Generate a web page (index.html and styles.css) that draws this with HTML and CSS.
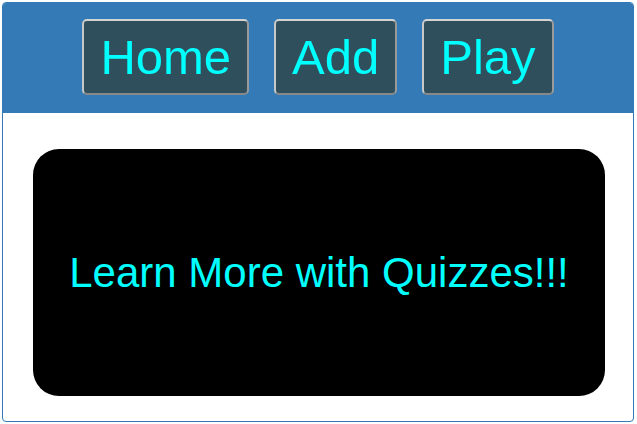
FILE: index.html
```html
<!DOCTYPE html>
<html>
<head>
<meta charset="utf-8">
<link rel="stylesheet" href="styles.css">
</head>
<body>
<div class="app">
  <header class="nav">
    <button class="nav-btn">Home</button>
    <button class="nav-btn">Add</button>
    <button class="nav-btn">Play</button>
  </header>
  <main class="content">
    <div class="hero">Learn More with Quizzes!!!</div>
  </main>
</div>
</body>
</html>
```
FILE: styles.css
```css
html, body {
  margin: 0;
  padding: 0;
  background: #ffffff;
}
body {
  font-family: "Liberation Sans", Arial, sans-serif;
}
.app {
  margin: 2px 0 0 2px;
  width: 630px;
  height: 418px;
  border: 1px solid #337ab7;
  border-radius: 4px;
  overflow: hidden;
  display: flex;
  flex-direction: column;
}
.nav {
  background: #337ab7;
  height: 110px;
  display: flex;
  justify-content: center;
  align-items: flex-start;
  gap: 25px;
  padding-top: 16px;
  box-sizing: border-box;
}
.nav-btn {
  font-family: "Liberation Sans", Arial, sans-serif;
  font-size: 49px;
  line-height: 56px;
  color: #00ffff;
  background: #2f4f5c;
  border: 2px solid;
  border-color: #d4d4d4 #9a9a9a #888888 #c8c8c8;
  border-radius: 5px;
  padding: 8px 16px;
  margin: 0;
}
.content {
  flex: 1;
  padding: 36px 28px 25px 30px;
  display: flex;
}
.hero {
  flex: 1;
  background: #000000;
  border-radius: 26px;
  color: #00ffff;
  font-size: 42px;
  display: flex;
  align-items: center;
  justify-content: center;
}
```
